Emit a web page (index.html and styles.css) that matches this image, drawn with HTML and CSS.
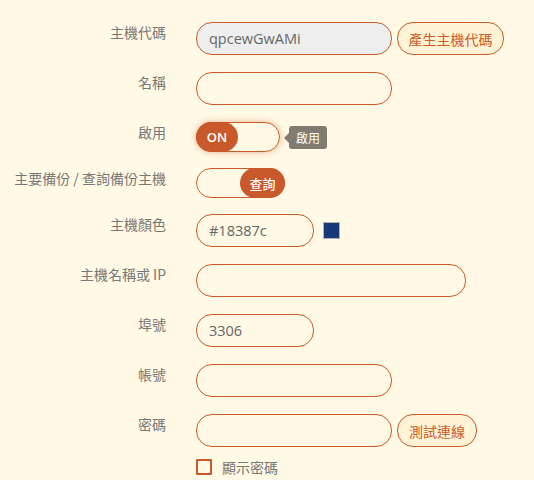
FILE: index.html
```html
<!DOCTYPE html>
<html lang="zh-Hant">
<head>
<meta charset="utf-8">
<title>主機設定</title>
<link rel="stylesheet" href="styles.css">
</head>
<body>
<form class="form">
  <div class="row">
    <label class="label">主機代碼</label>
    <div class="field">
      <input class="input input-md is-readonly" type="text" value="qpcewGwAMi" readonly>
      <button type="button" class="btn">產生主機代碼</button>
    </div>
  </div>
  <div class="row">
    <label class="label">名稱</label>
    <div class="field"><input class="input input-md" type="text"></div>
  </div>
  <div class="row row-toggle">
    <label class="label">啟用</label>
    <div class="field">
      <div class="toggle toggle-on is-focus"><span class="knob">ON</span></div>
      <div class="tip">啟用</div>
    </div>
  </div>
  <div class="row row-toggle">
    <label class="label">主要備份 / 查詢備份主機</label>
    <div class="field">
      <div class="toggle toggle-right"><span class="knob knob-wide">查詢</span></div>
    </div>
  </div>
  <div class="row">
    <label class="label">主機顏色</label>
    <div class="field">
      <input class="input input-sm" type="text" value="#18387c">
      <span class="swatch"></span>
    </div>
  </div>
  <div class="row">
    <label class="label">主機名稱或 IP</label>
    <div class="field"><input class="input input-lg" type="text"></div>
  </div>
  <div class="row">
    <label class="label">埠號</label>
    <div class="field"><input class="input input-sm" type="text" value="3306"></div>
  </div>
  <div class="row">
    <label class="label">帳號</label>
    <div class="field"><input class="input input-md" type="text"></div>
  </div>
  <div class="row row-last">
    <label class="label">密碼</label>
    <div class="field field-col">
      <div class="field">
        <input class="input input-md" type="password">
        <button type="button" class="btn btn-test">測試連線</button>
      </div>
      <label class="check"><span class="box"></span><span class="check-text">顯示密碼</span></label>
    </div>
  </div>
</form>
</body>
</html>
```
FILE: styles.css
```css
* { box-sizing: border-box; }
html, body {
  margin: 0;
  background: #fff9e6;
}
body {
  font-family: "Open Sans", "Noto Sans CJK TC", sans-serif;
  color: #666;
  width: 534px;
  height: 480px;
  overflow: hidden;
}
.form {
  padding-top: 22px;
}
.row {
  display: grid;
  grid-template-columns: 166px 1fr;
  column-gap: 30px;
  margin-bottom: 17px;
}
.row-toggle { margin-bottom: 16px; }
.label {
  text-align: right;
  font-size: 14px;
  line-height: 20px;
  padding-top: 0;
  color: #777;
  font-family: "Noto Sans CJK TC", "Open Sans", sans-serif;
}
.field {
  display: flex;
  align-items: center;
}
.field-col {
  flex-direction: column;
  align-items: flex-start;
  gap: 10px;
}
.input {
  height: 33px;
  border: 1px solid #cd5a28;
  border-radius: 16px;
  background: transparent;
  padding: 0 12px;
  font-family: "Open Sans", "Noto Sans CJK TC", sans-serif;
  font-size: 14.5px;
  color: #666;
  outline: none;
}
.input-sm { width: 118px; }
.input-md { width: 196px; }
.input-lg { width: 270px; }
.is-readonly { background: #eeeeee; }
.btn {
  margin-left: 5px;
  height: 33px;
  padding: 0;
  white-space: nowrap;
  border: 1px solid #cd5a28;
  border-radius: 16px;
  background: #fff3d6;
  color: #cd5a28;
  font-family: "Noto Sans CJK TC", sans-serif;
  font-size: 14px;
  width: 107px;
}
.btn-test { width: 80px; }
.toggle {
  height: 30px;
  width: 84px;
  border: 1px solid #cd5a28;
  border-radius: 15px;
  display: flex;
  align-items: stretch;
}
.toggle-right {
  width: 89px;
  justify-content: flex-end;
}
.is-focus { box-shadow: 0 0 6px rgba(205, 90, 40, 0.45); }
.knob {
  width: 42px;
  margin: -1px;
  border-radius: 15px;
  background: #c9582a;
  color: #fff;
  font-size: 13px;
  font-weight: 600;
  display: flex;
  align-items: center;
  justify-content: center;
  font-family: "Open Sans", "Noto Sans CJK TC", sans-serif;
}
.knob-wide {
  width: 45px;
  font-family: "Noto Sans CJK TC", sans-serif;
  font-weight: 500;
}
.tip {
  position: relative;
  margin-left: 9px;
  height: 23px;
  padding: 0 7px;
  border-radius: 3px;
  background: #7f7b70;
  color: #fff;
  font-size: 12px;
  line-height: 23px;
  font-family: "Noto Sans CJK TC", sans-serif;
}
.tip::before {
  content: "";
  position: absolute;
  left: -5px;
  top: 7px;
  border-style: solid;
  border-width: 5px 5px 5px 0;
  border-color: transparent #7f7b70 transparent transparent;
}
.swatch {
  margin-left: 9px;
  width: 17px;
  height: 17px;
  background: #18387c;
  border: 1px solid #b4b2aa;
}
.check {
  display: flex;
  align-items: center;
}
.box {
  width: 16px;
  height: 16px;
  border: 2px solid #cd5a28;
  border-radius: 1px;
}
.check-text {
  margin-left: 10px;
  font-family: "Noto Sans CJK TC", sans-serif;
  font-size: 14px;
  color: #777;
}
```
